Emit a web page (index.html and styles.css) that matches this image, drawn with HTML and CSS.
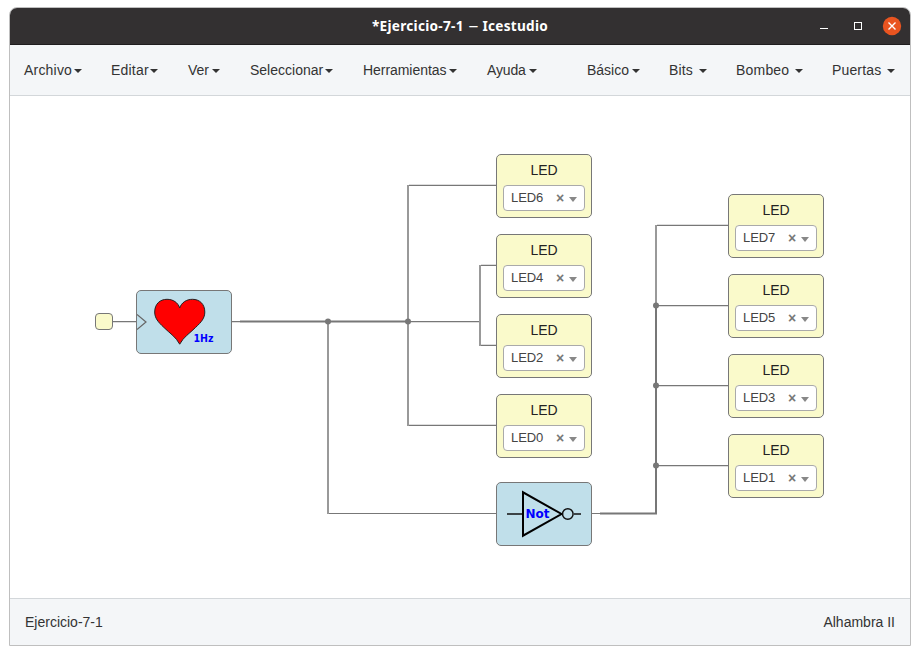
FILE: index.html
```
<!DOCTYPE html>
<html lang="es">
<head>
<meta charset="utf-8">
<title>Icestudio</title>
<link rel="stylesheet" href="styles.css">
</head>
<body>
<div class="window">
  <header class="titlebar">
    <h1>*Ejercicio-7-1 <span class="dash">–</span> Icestudio</h1>
    <svg class="controls" width="100" height="35" viewBox="0 0 100 35">
      <path d="M10 19.500h8" stroke="#fff"/>
      <rect x="44.500" y="13.500" width="7" height="7" fill="none" stroke="#fff"/>
      <circle cx="82" cy="17" r="9.200" fill="#e95420"/>
      <path d="M78.500 13.500l7 7m0-7l-7 7" stroke="#fff" stroke-width="1.400"/>
    </svg>
  </header>
  <nav class="menu">
    <a class="archivo"><span>Archivo</span><i></i></a>
    <a class="editar"><span>Editar</span><i></i></a>
    <a class="ver"><span>Ver</span><i></i></a>
    <a class="seleccionar"><span>Seleccionar</span><i></i></a>
    <a class="herramientas"><span>Herramientas</span><i></i></a>
    <a class="ayuda"><span>Ayuda</span><i></i></a>
    <a class="basico"><span>Básico</span><i></i></a>
    <a class="bits"><span>Bits</span><i></i></a>
    <a class="bombeo"><span>Bombeo</span><i></i></a>
    <a class="puertas"><span>Puertas</span><i></i></a>
  </nav>
  <main class="canvas">
    <svg class="wires" width="900" height="502" viewBox="10 96 900 502">
      <g class="halo">
        <path d="M112 322.500H136M232 322.500H240M408 322.500H480M409 184.500H496M481 264.500H496M481 344.500H496M409 424.500H496M657 224.500H728M657 306.500H728M657 386.500H728M657 466.500H728"/>
      </g>
      <g class="wire">
        <path d="M112 321.500H136M232 321.500H480M479.500 265.500H496M479.500 345.500H496M407 185.500H496M407 425.500H496M327 513.500H496M592 513.500H656M655 225.500H728M656 305.500H728M656 385.500H728M656 465.500H728"/>
      </g>
      <path class="riser" d="M480 265V346M408 185V426M328 321V514M656 225V306"/>
      <path class="bus" d="M240 321.500H408M600 513.500H656V305.500"/>
      <g class="joint">
        <circle cx="328" cy="321.500" r="3"/><circle cx="408" cy="321.500" r="3"/>
        <circle cx="656" cy="305.500" r="3"/><circle cx="656" cy="385.500" r="3"/><circle cx="656" cy="465.500" r="3"/>
      </g>
    </svg>
    <div class="port"></div>
    <div class="block heart">
      <svg width="94" height="62" viewBox="137 291 94 62">
        <path d="M137 314.500L146 322L137 329.500" fill="none" stroke="#666" stroke-width="1.200"/>
        <path d="M179.700 344.200C176 337 170 333.500 164 327.500C158 322 154.700 318 154.700 312C154.700 304 160 299.300 167 299.300C173 299.300 178 302.500 179.700 308C181.500 302.500 186.500 299.300 192.500 299.300C199.500 299.300 204.800 304 204.800 312C204.800 318 201.500 322 195.500 327.500C189.500 333.500 183.500 337 179.700 344.200Z" fill="#f00" stroke="#222"/>
        <text x="193.500" y="342" font-size="11" textLength="20" lengthAdjust="spacingAndGlyphs">1Hz</text>
      </svg>
    </div>
    <div class="block not">
      <svg width="94" height="62" viewBox="497 483 94 62">
        <path d="M507 514H523M574 514H581" stroke="#111" stroke-width="1.500"/>
        <path d="M523 492.300V535.700L561.500 514Z" fill="none" stroke="#000" stroke-width="2"/>
        <circle cx="567.800" cy="514" r="5.300" fill="none" stroke="#111" stroke-width="1.500"/>
        <text x="525.500" y="518" font-size="12" textLength="24">Not</text>
      </svg>
    </div>
    <div class="leds left">
      <section class="led"><h2>LED</h2><div class="select"><span>LED6</span><b>×</b><i></i></div></section>
      <section class="led"><h2>LED</h2><div class="select"><span>LED4</span><b>×</b><i></i></div></section>
      <section class="led"><h2>LED</h2><div class="select"><span>LED2</span><b>×</b><i></i></div></section>
      <section class="led"><h2>LED</h2><div class="select"><span>LED0</span><b>×</b><i></i></div></section>
    </div>
    <div class="leds right">
      <section class="led"><h2>LED</h2><div class="select"><span>LED7</span><b>×</b><i></i></div></section>
      <section class="led"><h2>LED</h2><div class="select"><span>LED5</span><b>×</b><i></i></div></section>
      <section class="led"><h2>LED</h2><div class="select"><span>LED3</span><b>×</b><i></i></div></section>
      <section class="led"><h2>LED</h2><div class="select"><span>LED1</span><b>×</b><i></i></div></section>
    </div>
  </main>
  <footer class="status"><span>Ejercicio-7-1</span><span class="board">Alhambra II</span></footer>
</div>
</body>
</html>
```
FILE: styles.css
```
* { box-sizing: border-box; }
body { margin: 0; padding: 7px 9px 9px; height: 655px; overflow: hidden; background: #fff; font-family: "Liberation Sans", Arial, sans-serif; color: #333; }
.window { display: flex; flex-direction: column; width: 902px; height: 639px; border: 1px solid #bfbfbf; border-radius: 8px 8px 0 0; overflow: hidden; }
.titlebar { display: grid; grid-template-columns: 100px 1fr 100px; height: 37px; flex: none; background: #333031; border-bottom: 1px solid #1f1d1e; }
.titlebar h1 { grid-column: 2; margin: 0; text-align: center; font: bold 13.6px/36px "Noto Sans", sans-serif; letter-spacing: .28px; color: #fff; white-space: nowrap; }
.dash { display: inline-block; font-weight: 400; margin: 0 2px; transform: scaleX(1.45); }
.controls { margin-top: 1px; }
.menu { display: flex; flex: none; gap: 30px; height: 51px; padding: 0 14px; background: #f4f6f8; border-bottom: 1px solid #d3d7da; font-size: 14px; line-height: 50px; }
.menu a { display: flex; justify-content: space-between; align-items: center; flex: none; white-space: nowrap; }
.menu span { min-width: 0; }
.menu i { flex: none; border: 4px solid transparent; border-top-color: #333; border-bottom: 0; margin-top: 2px; }
.archivo { width: 58px; letter-spacing: .2px; }
.editar { width: 47px; letter-spacing: .2px; margin-left: -1px; }
.ver { width: 32px; }
.seleccionar { width: 83px; }
.herramientas { width: 94px; letter-spacing: -.05px; }
.ayuda { width: 50px; letter-spacing: -.15px; }
.basico { width: 53px; margin-left: 20px; }
.bits { width: 38px; margin-left: -1px; letter-spacing: .1px; }
.bombeo { width: 67px; margin-left: -1px; letter-spacing: .2px; }
.puertas { width: 63px; margin-left: -1px; letter-spacing: .15px; }
.canvas { position: relative; flex: 1; background: #fff; }
.wires { display: block; }
.wire { fill: none; stroke: #777; stroke-width: 1; }
.halo { fill: none; stroke: #ddd; stroke-width: 1; }
.riser { fill: none; stroke: #999; stroke-width: 2; }
.bus { fill: none; stroke: #777; stroke-width: 2; }
.joint { fill: #777; }
.port { position: absolute; left: 85px; top: 217px; width: 18px; height: 17px; border: 1px solid #777; border-radius: 4px; background: #fafacb; }
.block { position: absolute; width: 96px; height: 64px; border: 1px solid #777; border-radius: 5px; background: #c0dfea; }
.block svg { display: block; }
.block text { font-family: "DejaVu Sans", sans-serif; font-weight: bold; fill: #00f; }
.heart { left: 126px; top: 194px; }
.not { left: 486px; top: 386px; }
.leds { position: absolute; display: flex; flex-direction: column; gap: 16px; }
.left { left: 486px; top: 58px; }
.right { left: 718px; top: 98px; }
.led { width: 96px; height: 64px; padding: 6px 6px 0; border: 1px solid #777; border-radius: 5px; background: #fafacb; }
.led h2 { margin: 0 0 5px; font-size: 14px; font-weight: 400; line-height: 19px; text-align: center; color: #222; }
.select { display: flex; align-items: center; height: 26px; padding: 0 6px 0 7px; border: 1px solid #aaa; border-radius: 4px; background: #fff; font-size: 13px; color: #444; }
.select span { width: 45px; margin-top: -2px; letter-spacing: -.1px; }
.select b { width: 8px; margin: -1px 5px 0 0; color: #777; font-size: 14px; line-height: 20px; }
.select i { flex: none; border: 4.500px solid transparent; border-top: 5px solid #888; border-bottom: 0; margin-top: 3px; }
.status { display: flex; flex: none; justify-content: space-between; height: 47px; padding: 0 15px; border-top: 1px solid #d3d7da; background: #f4f6f8; font-size: 14px; line-height: 46px; }
```
